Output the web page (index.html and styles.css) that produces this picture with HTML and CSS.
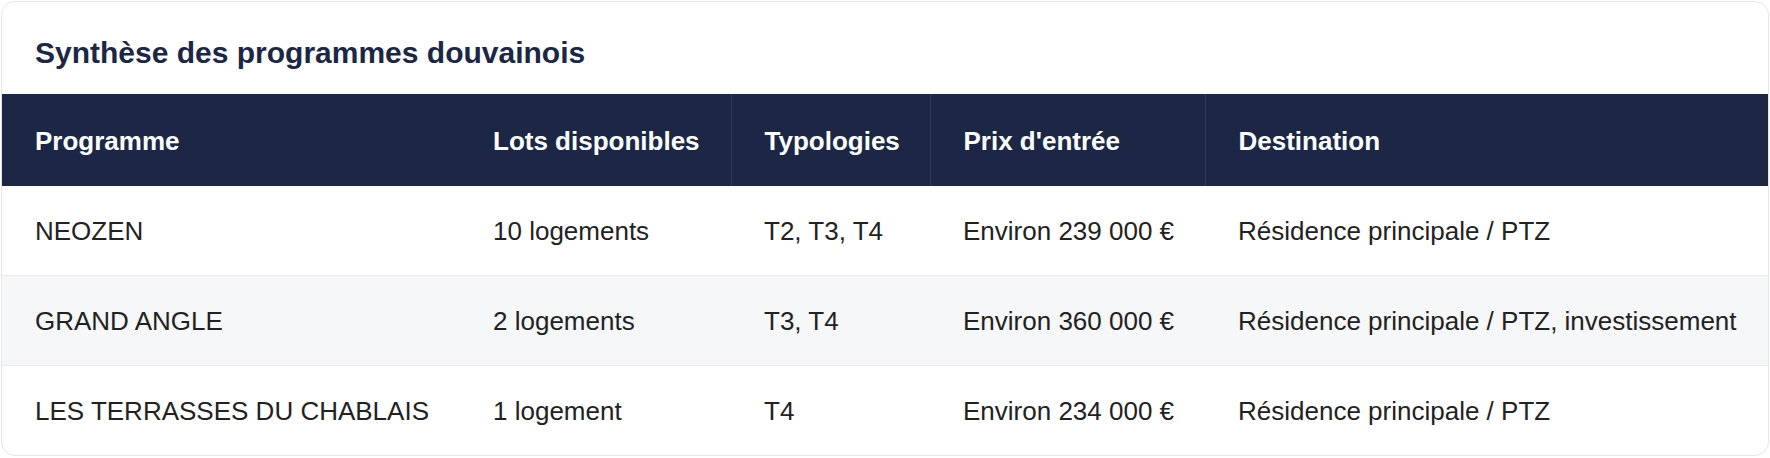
FILE: index.html
```html
<!DOCTYPE html>
<html lang="fr">
<head>
<meta charset="utf-8">
<title>Synthèse des programmes douvainois</title>
<link rel="stylesheet" href="styles.css">
</head>
<body>
<section class="card">
  <h2 class="card-title">Synthèse des programmes douvainois</h2>
  <table class="summary">
    <colgroup>
      <col class="c-prog">
      <col class="c-lots">
      <col class="c-typo">
      <col class="c-prix">
      <col class="c-dest">
    </colgroup>
    <thead>
      <tr>
        <th>Programme</th>
        <th class="no-div">Lots disponibles</th>
        <th>Typologies</th>
        <th>Prix d'entrée</th>
        <th>Destination</th>
      </tr>
    </thead>
    <tbody>
      <tr>
        <td>NEOZEN</td>
        <td>10 logements</td>
        <td>T2, T3, T4</td>
        <td>Environ 239 000 €</td>
        <td>Résidence principale / PTZ</td>
      </tr>
      <tr>
        <td>GRAND ANGLE</td>
        <td>2 logements</td>
        <td>T3, T4</td>
        <td>Environ 360 000 €</td>
        <td>Résidence principale / PTZ, investissement</td>
      </tr>
      <tr>
        <td>LES TERRASSES DU CHABLAIS</td>
        <td>1 logement</td>
        <td>T4</td>
        <td>Environ 234 000 €</td>
        <td>Résidence principale / PTZ</td>
      </tr>
    </tbody>
  </table>
</section>
</body>
</html>
```

FILE: styles.css
```css
html, body {
  margin: 0;
  padding: 0;
  background: #ffffff;
}

body {
  font-family: "Liberation Sans", Arial, Helvetica, sans-serif;
  color: #222222;
}

.card {
  margin: 1px 1px 0 1px;
  border: 1px solid #e3e6ea;
  border-radius: 14px;
  overflow: hidden;
  background: #ffffff;
}

.card-title {
  margin: 0;
  padding: 28px 33px 19px 33px;
  font-size: 30px;
  line-height: 45px;
  font-weight: 700;
  color: #1b2745;
}

.summary {
  width: 100%;
  border-collapse: collapse;
  table-layout: fixed;
}

.c-prog { width: 458px; }
.c-lots { width: 271px; }
.c-typo { width: 199px; }
.c-prix { width: 275px; }
.c-dest { width: auto; }

.summary th {
  background: #1b2745;
  color: #ffffff;
  text-align: left;
  font-size: 26px;
  font-weight: 700;
  line-height: 40px;
  padding: 27px 33px 25px 33px;
  border-left: 1px solid #2f3b58;
  white-space: nowrap;
}

.summary th:first-child,
.summary th.no-div {
  border-left: 0;
}

.summary td {
  text-align: left;
  font-size: 26px;
  line-height: 39px;
  padding: 26px 33px 24px 33px;
  border-bottom: 1px solid #e8eaee;
  white-space: nowrap;
  color: #222222;
}

.summary tbody tr:nth-child(even) td {
  background: #f6f7f9;
}

.summary tbody tr:last-child td {
  border-bottom: 0;
}
```
